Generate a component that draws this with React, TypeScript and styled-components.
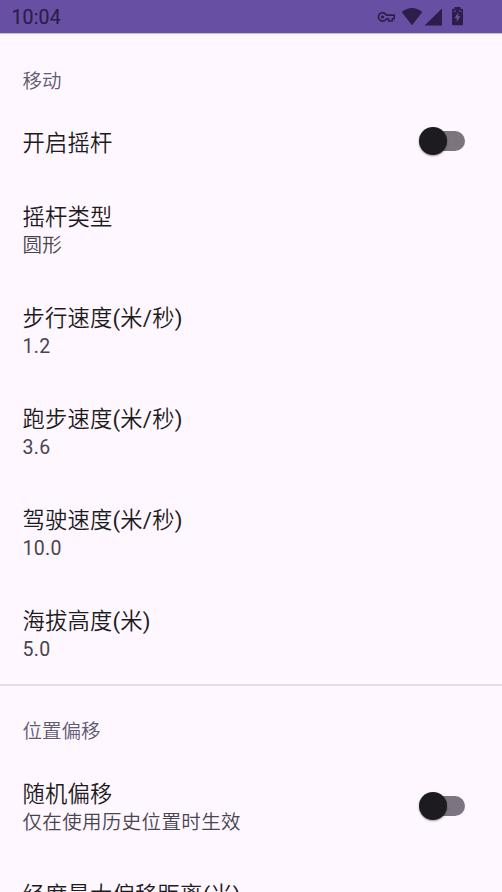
import React from "react";
import styled, { createGlobalStyle } from "styled-components";

const GlobalStyle = createGlobalStyle`
  html, body { margin: 0; height: 100%; overflow: hidden; }
  body { background: #fef7ff; font-family: Roboto, "Noto Sans CJK SC", sans-serif; }
`;

const Screen = styled.main`
  height: 892px;
  overflow: hidden;
  background: #fef7ff;
`;

const StatusBar = styled.header`
  display: flex;
  justify-content: space-between;
  height: 33px;
  background: #6750a4;
  border-bottom: 1px solid #c8bbdd;
  color: #2b1e48;
`;

const Clock = styled.time`
  padding-left: 11.5px;
  font-size: 19.5px;
  font-weight: 400;
  letter-spacing: 0.15px;
  line-height: 36px;
  -webkit-text-stroke: 0.2px currentColor;
`;

const StatusIcons = styled.svg`
  width: 132px;
  height: 33px;
`;

const Section = styled.section<{ $divided?: boolean }>`
  border-top: ${(p) => (p.$divided ? "2px solid #e4dde6" : "0")};
`;

const Category = styled.h2<{ $height: number; $top: number }>`
  box-sizing: border-box;
  height: ${(p) => p.$height}px;
  margin: 0;
  padding: ${(p) => p.$top}px 22.5px 0;
  color: #625b71;
  font-size: 19.5px;
  font-weight: 350;
  line-height: 28px;
`;

const Row = styled.div<{ $height: number }>`
  box-sizing: border-box;
  display: flex;
  align-items: center;
  justify-content: space-between;
  height: ${(p) => p.$height}px;
  padding: 0 37.5px 0 22.5px;
`;

const Labels = styled.div<{ $single: boolean }>`
  display: flex;
  flex-direction: column;
  padding-top: ${(p) => (p.$single ? 3 : 2)}px;
  font-weight: 350;
  white-space: nowrap;
`;

const Title = styled.span`
  color: #1d1b20;
  font-size: 22.3px;
  letter-spacing: 0.2px;
  line-height: 31px;
`;

const Summary = styled.span`
  margin-bottom: 1px;
  color: #49454f;
  font-size: 19.5px;
  letter-spacing: 0.35px;
  line-height: 26px;
`;

const Latin = styled.span`
  font-weight: 400;
`;

const Track = styled.span`
  box-sizing: border-box;
  display: flex;
  align-items: center;
  width: 40px;
  height: 20px;
  margin-top: -1px;
  border-radius: 10px;
  background: #7c757f;
`;

const Thumb = styled.span`
  flex: none;
  width: 28px;
  height: 28px;
  margin-left: -5.5px;
  border-radius: 50%;
  background: #1d1b20;
  box-shadow: 0 1px 2px rgba(0, 0, 0, 0.4);
`;

type Setting = { title: string; summary?: string; toggle?: boolean; height?: number };

const movement: Setting[] = [
  { title: "开启摇杆", toggle: true, height: 75 },
  { title: "摇杆类型", summary: "圆形" },
  { title: "步行速度(米/秒)", summary: "1.2" },
  { title: "跑步速度(米/秒)", summary: "3.6" },
  { title: "驾驶速度(米/秒)", summary: "10.0" },
  { title: "海拔高度(米)", summary: "5.0" },
];

const offset: Setting[] = [
  { title: "随机偏移", summary: "仅在使用历史位置时生效", toggle: true },
  { title: "经度最大偏移距离(米)", summary: "10.0" },
];

// Digits and punctuation take the regular weight beside the lighter Han glyphs.
const MixedText = ({ children }: { children: string }) => (
  <>
    {children
      .split(/([\x20-\x7e]+)/)
      .map((part, i) => (i % 2 ? <Latin key={i}>{part}</Latin> : part))}
  </>
);

const SettingRow = ({ title, summary, toggle, height = 101 }: Setting) => (
  <Row $height={height}>
    <Labels $single={!summary}>
      <Title>
        <MixedText>{title}</MixedText>
      </Title>
      {summary && (
        <Summary>
          <MixedText>{summary}</MixedText>
        </Summary>
      )}
    </Labels>
    {toggle && (
      <Track role="switch" aria-checked={false} aria-label={title}>
        <Thumb />
      </Track>
    )}
  </Row>
);

export default function App() {
  return (
    <>
      <GlobalStyle />
      <Screen>
        <StatusBar>
          <Clock>10:04</Clock>
          <StatusIcons viewBox="0 0 132 33" fill="currentColor" aria-hidden="true">
            <path
              d="M16.4 15.1H24.2V18.8H22.3V21H18.6V18.8H16.4A4.2 4.2 0 1 1 16.4 15.1Z"
              fill="none"
              stroke="currentColor"
              strokeWidth="1.6"
              strokeLinejoin="round"
            />
            <circle cx="12.5" cy="17" r="1.6" />
            <path d="M31.7 12Q42 4 52.3 12L42 25.2Z" />
            <path d="M72 8.5V25.5H54.5Z" />
            <path
              fillRule="evenodd"
              d="M84.5 7V8.8H83.2Q82 8.8 82 10V24Q82 25.2 83.2 25.2H91.8Q93 25.2 93 24V10Q93 8.8 91.8 8.8H90.5V7ZM88.3 12.5V16.2H90.5L86.7 22V18.2H84.5Z"
            />
            <path d="M83.5 11.8L86 10.6M89 10.6L91.5 11.8" stroke="#6750a4" strokeWidth="1" />
          </StatusIcons>
        </StatusBar>
        <Section>
          <Category $height={70} $top={34}>移动</Category>
          {movement.map((s) => (
            <SettingRow key={s.title} {...s} />
          ))}
        </Section>
        <Section $divided>
          <Category $height={70} $top={32}>位置偏移</Category>
          {offset.map((s) => (
            <SettingRow key={s.title} {...s} />
          ))}
        </Section>
      </Screen>
    </>
  );
}
